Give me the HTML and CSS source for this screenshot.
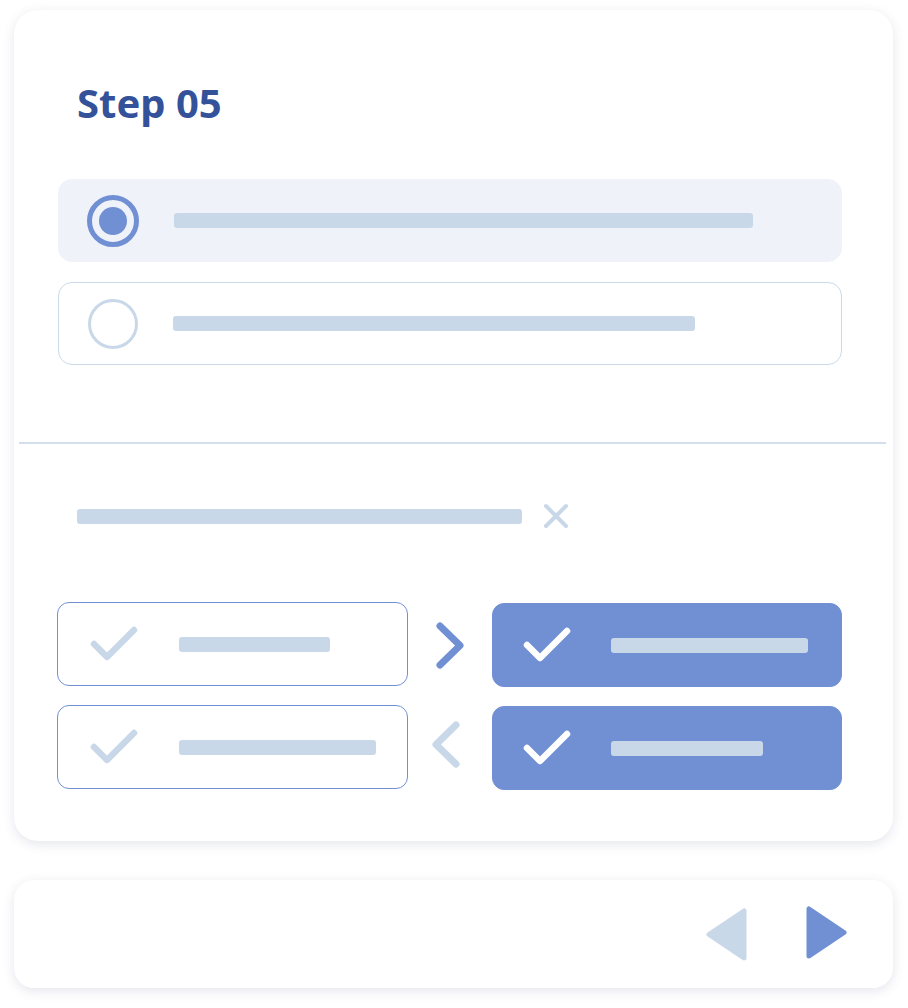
FILE: index.html
```html
<!DOCTYPE html>
<html lang="en">
<head>
<meta charset="UTF-8" />
<title>Step 05</title>
<link rel="stylesheet" href="styles.css">
</head>
<body>
  <div class="page">
    <div class="card main">
      <div class="question">
        <h1>Step 05</h1>
        <div class="option selected">
          <span class="radio on"><span class="dot"></span></span>
          <span class="line" style="width:579px"></span>
        </div>
        <div class="option">
          <span class="radio"></span>
          <span class="line" style="width:522px"></span>
        </div>
      </div>

      <hr class="divider" />

      <div class="filter">
        <span class="line" style="width:445px"></span>
        <svg class="close" width="26" height="26" viewBox="0 0 26 26">
          <path d="M3 3 L23 23 M23 3 L3 23" />
        </svg>
      </div>

      <div class="transfer">
        <div class="col">
          <div class="item">
            <svg class="check" width="48" height="36" viewBox="0 0 48 36"><polyline points="4,18 17,31 44,4" /></svg>
            <span class="line" style="width:151px"></span>
          </div>
          <div class="item">
            <svg class="check" width="48" height="36" viewBox="0 0 48 36"><polyline points="4,18 17,31 44,4" /></svg>
            <span class="line" style="width:197px"></span>
          </div>
        </div>
        <div class="arrows">
          <svg class="chev active" width="28" height="47" viewBox="0 0 28 47"><polyline points="4,4 24,23.5 4,43" /></svg>
          <svg class="chev back" width="28" height="47" viewBox="0 0 28 47"><polyline points="24,4 4,23.5 24,43" /></svg>
        </div>
        <div class="col">
          <div class="item done">
            <svg class="check" width="48" height="36" viewBox="0 0 48 36"><polyline points="4,18 17,31 44,4" /></svg>
            <span class="line" style="width:197px"></span>
          </div>
          <div class="item done">
            <svg class="check" width="48" height="36" viewBox="0 0 48 36"><polyline points="4,18 17,31 44,4" /></svg>
            <span class="line" style="width:152px"></span>
          </div>
        </div>
      </div>
    </div>

    <div class="card nav">
      <svg class="tri prev" width="41" height="53" viewBox="0 0 41 53"><path d="M38 3 L38 50 L3 26.5 Z" /></svg>
      <svg class="tri next" width="41" height="53" viewBox="0 0 41 53"><path d="M3 3 L3 50 L38 26.5 Z" /></svg>
    </div>
  </div>
</body>
</html>
```

FILE: styles.css
```css
* {
  box-sizing: border-box;
}
html, body {
  margin: 0;
  padding: 0;
  background: #fff;
  font-family: 'Noto Sans', sans-serif;
}
.page {
  width: 879px;
  margin-left: 14px;
  padding: 10px 0 20px;
}
.card {
  background: #fff;
  border-radius: 24px;
  box-shadow: 0 3px 12px rgba(70, 80, 130, 0.14);
}
.main {
  height: 831px;
  padding-top: 73px;
}
.question {
  padding: 0 51px 0 44px;
}
h1 {
  margin: 0 0 56px 19px;
  font-size: 40px;
  line-height: 40px;
  font-weight: 700;
  color: #34529a;
}
.line {
  display: block;
  height: 15px;
  border-radius: 3px;
  background: #c9d8e8;
}
.option {
  display: flex;
  align-items: center;
  gap: 35px;
  height: 83px;
  padding-left: 29px;
  border-radius: 14px;
  border: 1.5px solid #cbd9e9;
}
.option + .option {
  margin-top: 20px;
}
.option.selected {
  background: #eff2f9;
  border-color: #eff2f9;
}
.radio {
  width: 50px;
  height: 50px;
  border-radius: 50%;
  border: 3px solid #c9d8e8;
  flex: none;
  display: flex;
  align-items: center;
  justify-content: center;
}
.radio.on {
  width: 52px;
  height: 52px;
  border: 5px solid #7190d4;
  margin-left: -1px;
}
.radio .dot {
  width: 28px;
  height: 28px;
  border-radius: 50%;
  background: #7190d4;
}
.divider {
  margin: 77px 7px 0 5px;
  border: none;
  height: 2px;
  background: #d3dfec;
}
.filter {
  display: flex;
  align-items: center;
  gap: 21px;
  margin: 59px 0 0 63px;
  height: 26px;
}
.close path {
  stroke: #c9d8e8;
  stroke-width: 4;
  stroke-linecap: round;
  fill: none;
}
.transfer {
  display: flex;
  margin: 73px 0 0 43px;
}
.col {
  display: flex;
  flex-direction: column;
  gap: 19px;
}
.col:first-child {
  width: 351px;
}
.col:last-child {
  width: 350px;
  padding-top: 1px;
}
.item {
  display: flex;
  align-items: center;
  height: 84px;
  padding-left: 32px;
  gap: 41px;
  border: 1.5px solid #7190d4;
  border-radius: 12px;
}
.item .check polyline {
  fill: none;
  stroke: #c9d8e8;
  stroke-width: 6.5;
  stroke-linecap: round;
  stroke-linejoin: round;
}
.item.done {
  background: #7190d4;
  padding-left: 30px;
  gap: 40px;
}
.item.done .check polyline {
  stroke: #fff;
}
.arrows {
  width: 84px;
  display: flex;
  flex-direction: column;
  align-items: center;
  padding-top: 20px;
  gap: 52px;
}
.chev polyline {
  fill: none;
  stroke: #c9d8e8;
  stroke-width: 7;
  stroke-linecap: round;
  stroke-linejoin: round;
}
.chev.active polyline {
  stroke: #7190d4;
}
.chev.back {
  margin-right: 8px;
}
.nav {
  margin-top: 39px;
  height: 108px;
  border-radius: 20px;
  display: flex;
  align-items: center;
  justify-content: flex-end;
  gap: 59px;
  padding-right: 46px;
}
.tri path {
  stroke-width: 5;
  stroke-linejoin: round;
}
.tri.prev path {
  fill: #c9d8e8;
  stroke: #c9d8e8;
}
.tri.next path {
  fill: #7190d4;
  stroke: #7190d4;
}
.tri.next {
  margin-top: -4px;
}
```
